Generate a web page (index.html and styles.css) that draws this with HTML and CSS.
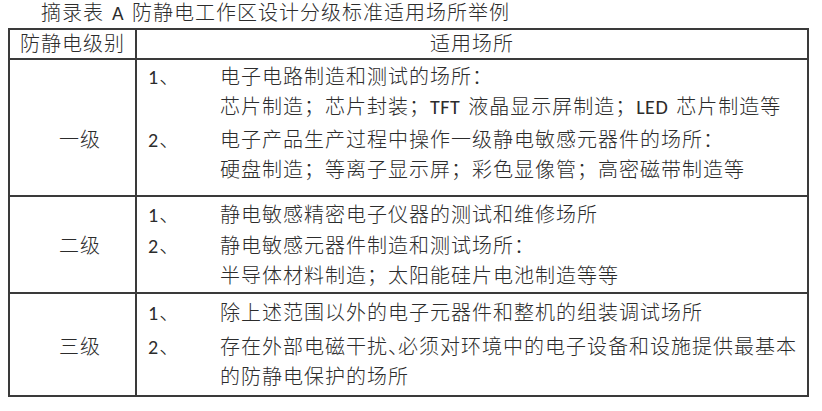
FILE: index.html
```html
<!DOCTYPE html>
<html lang="zh-CN">
<head>
<meta charset="utf-8">
<title>防静电工作区设计分级标准</title>
<link rel="stylesheet" href="styles.css">
</head>
<body>
<div class="page">
  <h1 class="caption">摘录表<span class="lat">A</span>防静电工作区设计分级标准适用场所举例</h1>
  <div class="table">
    <div class="row head">
      <div class="lvl">防静电级别</div>
      <div class="place">适用场所</div>
    </div>
    <div class="row r1">
      <div class="lvl">一级</div>
      <div class="items">
        <div class="item">
          <span class="num">1、</span>
          <div class="lines">
            <p>电子电路制造和测试的场所：</p>
            <p>芯片制造；芯片封装；<span class="lat">TFT </span>液晶显示屏制造；<span class="lat">LED </span>芯片制造等</p>
          </div>
        </div>
        <div class="item">
          <span class="num">2、</span>
          <div class="lines">
            <p>电子产品生产过程中操作一级静电敏感元器件的场所：</p>
            <p>硬盘制造；等离子显示屏；彩色显像管；高密磁带制造等</p>
          </div>
        </div>
      </div>
    </div>
    <div class="row r2">
      <div class="lvl">二级</div>
      <div class="items">
        <div class="item">
          <span class="num">1、</span>
          <div class="lines">
            <p>静电敏感精密电子仪器的测试和维修场所</p>
          </div>
        </div>
        <div class="item">
          <span class="num">2、</span>
          <div class="lines">
            <p>静电敏感元器件制造和测试场所：</p>
            <p>半导体材料制造；太阳能硅片电池制造等等</p>
          </div>
        </div>
      </div>
    </div>
    <div class="row r3">
      <div class="lvl">三级</div>
      <div class="items">
        <div class="item">
          <span class="num">1、</span>
          <div class="lines">
            <p>除上述范围以外的电子元器件和整机的组装调试场所</p>
          </div>
        </div>
        <div class="item">
          <span class="num">2、</span>
          <div class="lines">
            <p>存在外部电磁干扰<span class="half">、</span>必须对环境中的电子设备和设施提供最基本</p>
            <p>的防静电保护的场所</p>
          </div>
        </div>
      </div>
    </div>
  </div>
</div>
</body>
</html>
```
FILE: styles.css
```css
* { box-sizing: border-box; }
html, body {
  margin: 0;
  padding: 0;
  background: #ffffff;
}
body {
  font-family: "Liberation Sans", "Noto Sans CJK SC", sans-serif;
  font-weight: 300;
  color: #2c2c2c;
  font-size: 20px;
  letter-spacing: 1px;
}
.page {
  width: 822px;
  height: 411px;
  padding: 0 0 0 8px;
}
.caption {
  margin: 0 0 2px 0;
  padding-left: 33px;
  font-size: 20px;
  font-weight: 300;
  line-height: 26px;
  height: 26px;
}
.caption .lat {
  margin: 0 8px 0 8px;
}
.lat {
  font-family: "Carlito", "Liberation Sans Narrow", "Liberation Sans", sans-serif;
  letter-spacing: 0.5px;
}
.lines .lat {
  margin-right: 3px;
}
.half {
  font-feature-settings: "halt";
  letter-spacing: 0;
}
.table {
  width: 801px;
  border: 2px solid #3a3a3a;
  display: flex;
  flex-direction: column;
}
.row {
  display: flex;
  border-bottom: 2px solid #3a3a3a;
}
.row:last-child { border-bottom: none; }
.lvl {
  width: 127px;
  flex: none;
  border-right: 2px solid #3a3a3a;
  text-align: center;
  line-height: 30px;
}
.head { height: 30px; }
.head .lvl, .head .place { line-height: 28px; }
.place {
  flex: 1;
  text-align: center;
}
.r1 { height: 137px; }
.r2 { height: 97px; }
.r3 { height: 101px; }
.r1 .lvl, .r2 .lvl, .r3 .lvl { padding-left: 15px; }
.r1 .lvl { padding-top: 65px; }
.r2 .lvl { padding-top: 34px; }
.r3 .lvl { padding-top: 38px; }
.items {
  flex: 1;
  display: flex;
  flex-direction: column;
  padding-left: 11px;
}
.r1 .items { padding-top: 2px; gap: 3px; }
.r2 .items { padding-top: 3px; gap: 1px; }
.r3 .items { padding-top: 4px; gap: 4px; }
.item {
  display: flex;
}
.num {
  width: 72px;
  flex: none;
  line-height: 30px;
  font-family: "Carlito", "Liberation Sans", "Noto Sans CJK SC", sans-serif;
}
.lines p {
  margin: 0;
  line-height: 30px;
  white-space: nowrap;
}
```
